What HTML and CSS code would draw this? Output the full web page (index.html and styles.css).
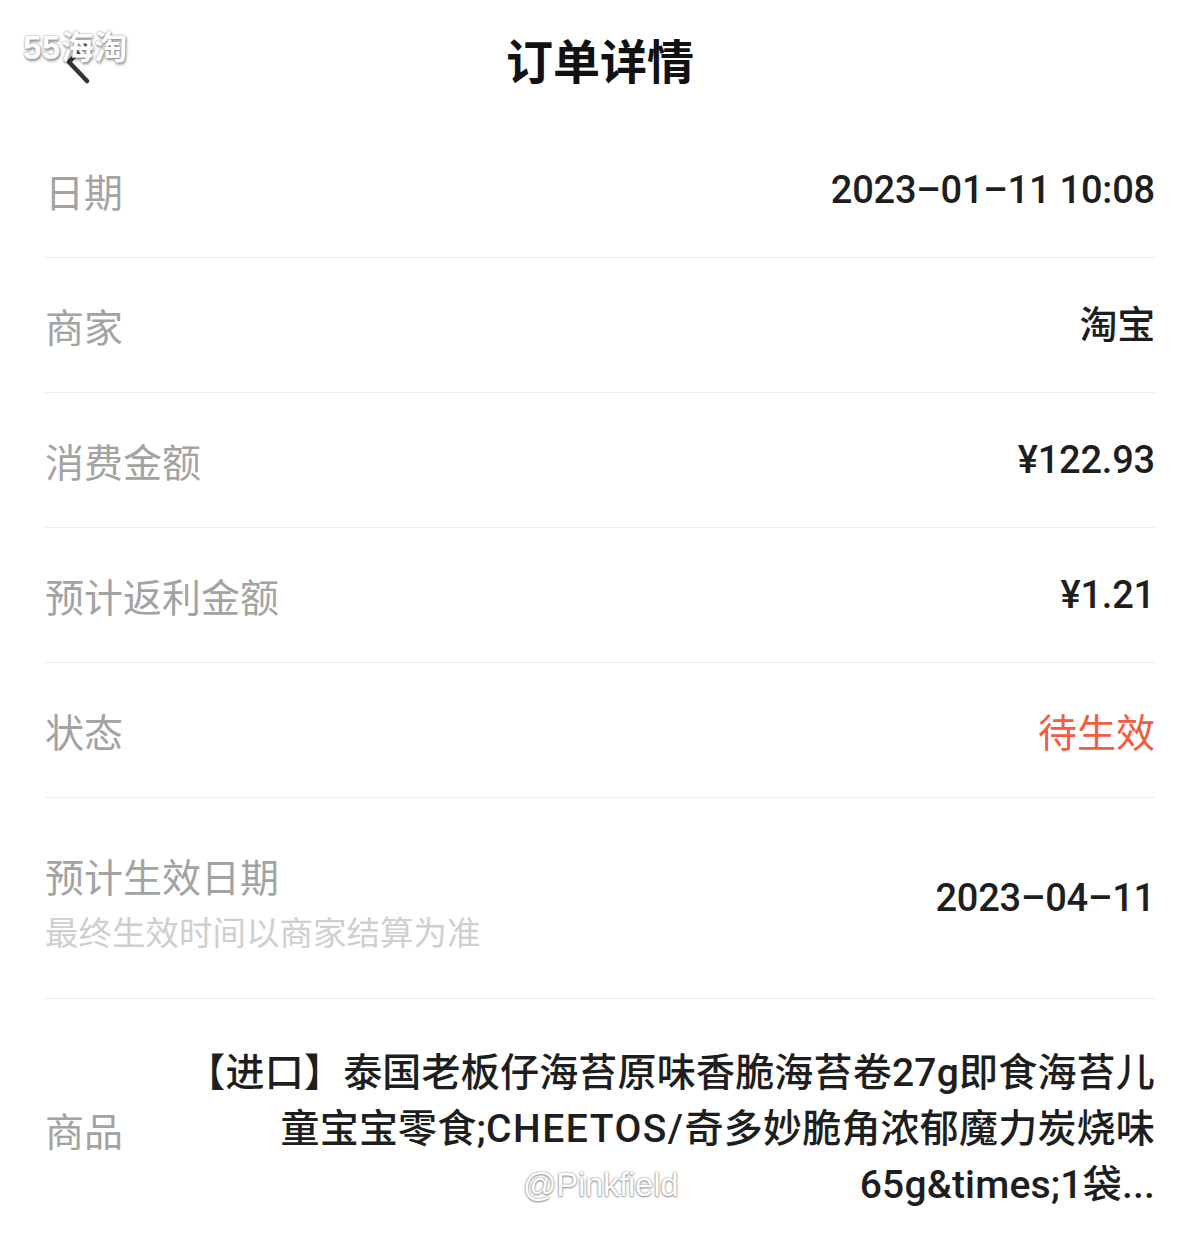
FILE: index.html
```html
<!DOCTYPE html>
<html lang="zh-CN">
<head>
<meta charset="utf-8">
<title>订单详情</title>
<link rel="stylesheet" href="styles.css">
</head>
<body>
<div class="page">
  <header class="nav">
    <button class="back" aria-label="返回">
      <svg width="40" height="60" viewBox="0 0 40 60"><path d="M27 11 L9 30 L27 49" fill="none" stroke="#333" stroke-width="4.5" stroke-linecap="round" stroke-linejoin="round"/></svg>
    </button>
    <h1 class="title">订单详情</h1>
    <span class="wm-top">55海淘</span>
  </header>
  <main class="list">
    <div class="row">
      <div class="label">日期</div>
      <div class="value">2023–01–11 10:08</div>
    </div>
    <div class="row">
      <div class="label">商家</div>
      <div class="value">淘宝</div>
    </div>
    <div class="row">
      <div class="label">消费金额</div>
      <div class="value">¥122.93</div>
    </div>
    <div class="row">
      <div class="label">预计返利金额</div>
      <div class="value">¥1.21</div>
    </div>
    <div class="row">
      <div class="label">状态</div>
      <div class="value red">待生效</div>
    </div>
    <div class="row tall">
      <div class="label-group">
        <div class="label">预计生效日期</div>
        <div class="sub">最终生效时间以商家结算为准</div>
      </div>
      <div class="value">2023–04–11</div>
    </div>
    <div class="row goods">
      <div class="label">商品</div>
      <div class="value multi">【进口】泰国老板仔海苔原味香脆海苔卷27g即食海苔儿<br>童宝宝零食;<span class="latin">CHEETOS/</span>奇多妙脆角浓郁魔力炭烧味<br>65g&amp;times;1袋...</div>
      <span class="wm-bottom">@Pinkfield</span>
    </div>
  </main>
</div>
</body>
</html>
```
FILE: styles.css
```css
* { box-sizing: border-box; }
html, body { margin: 0; padding: 0; background: #fff; }
body {
  font-family: "Roboto", "Noto Sans CJK SC", sans-serif;
  color: #222;
}
.page { width: 1200px; }
.nav {
  position: relative;
  height: 123px;
  display: flex;
  justify-content: center;
}
.title {
  margin: 31px 0 0;
  font-size: 47px;
  font-weight: 700;
  color: #111;
  font-family: "Noto Sans CJK SC", sans-serif;
  line-height: 56px;
  height: 56px;
}
.back {
  position: absolute;
  left: 60px;
  top: 32px;
  border: 0;
  background: none;
  padding: 0;
  width: 40px;
  height: 60px;
}
.back svg { display: block; }
.wm-top {
  position: absolute;
  left: 23px;
  top: 21px;
  font-size: 33px;
  font-weight: 700;
  color: #fff;
  letter-spacing: 0.5px;
  text-shadow: 0 0 2px #888, 1px 2px 3px rgba(0,0,0,0.45);
  font-family: "Liberation Sans", "Noto Sans CJK SC", sans-serif;
}
.list { padding: 0 45px; }
.row {
  position: relative;
  display: flex;
  align-items: center;
  justify-content: space-between;
  height: 135px;
  border-bottom: 1px solid #ededed;
}
.row.tall { height: 201px; }
.row.goods {
  height: auto;
  border-bottom: 0;
  padding: 46px 0 20px;
}
.label {
  font-size: 39px;
  color: #a3a3a3;
  font-family: "Noto Sans CJK SC", sans-serif;
  line-height: 56px;
}
.sub {
  font-size: 33.5px;
  color: #cfcfcf;
  font-family: "Noto Sans CJK SC", sans-serif;
  line-height: 56px;
}
.label-group { display: flex; flex-direction: column; padding-top: 10px; }
.value {
  font-size: 38px;
  font-weight: 500;
  color: #1e1e1e;
  text-align: right;
  line-height: 56px;
  letter-spacing: -0.2px;
}
.value.red { color: #f45b40; font-family: "Noto Sans CJK SC", sans-serif; font-weight: 400; font-size: 39px; letter-spacing: 0; }
.value.multi { line-height: 56px; font-size: 39px; letter-spacing: 0.2px; }
.latin { letter-spacing: 1.5px; }
.wm-bottom {
  position: absolute;
  left: 478px;
  top: 167px;
  font-size: 33px;
  color: #fff;
  font-family: "Liberation Sans", sans-serif;
  text-shadow: 0 0 2px #777, 0 1px 2px rgba(0,0,0,0.4);
  letter-spacing: -0.3px;
}
```
